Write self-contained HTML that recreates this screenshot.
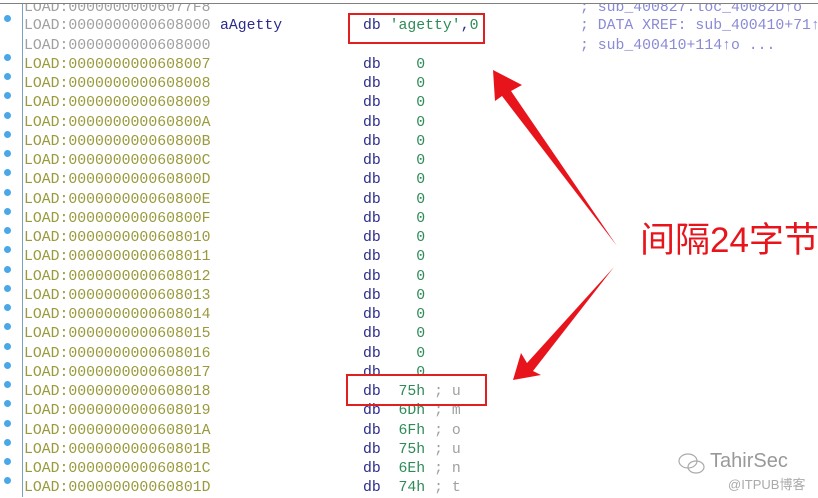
<!DOCTYPE html>
<html><head><meta charset="utf-8"><style>
html,body{margin:0;padding:0;}
body{width:818px;height:497px;background:#fff;position:relative;overflow:hidden;font-family:"Liberation Mono",monospace;font-size:14.8px;}
.r{position:absolute;left:0;height:19px;line-height:19px;white-space:pre;}
.a{position:absolute;left:24px;color:#9a9a3c;}
.g{color:#a0a0a0;}
.n{position:absolute;left:220px;color:#2b2b8c;}
.d{position:absolute;left:363px;color:#2b2b8c;}
.v{color:#2e8b57;}
.c{color:#a0a0a0;}
.s{position:absolute;left:580px;color:#8a8ad6;}
.dot{position:absolute;left:4px;width:7px;height:7px;border-radius:50%;background:#4aa8e8;}
</style></head><body>
<div style="position:absolute;left:22px;top:3px;width:1px;height:494px;background:#7aa0c8"></div>
<div id="rows"></div>
<div class="r" style="top:-1px"><span class="a g">LOAD:00000000006077F8</span><span class="s">; sub_400827.loc_40082D↑o</span></div>
<div class="r" style="top:17px"><span class="a g">LOAD:0000000000608000</span><span class="n">aAgetty</span><span class="d">db <span class="v">'agetty'</span>,<span class="v">0</span></span><span class="s">; DATA XREF: sub_400410+71↑</span></div>
<div class="r" style="top:37px"><span class="a g">LOAD:0000000000608000</span><span class="s">; sub_400410+114↑o ...</span></div>
<div class="dot" style="top:15px"></div>
<script>
var addrs=["608007","608008","608009","60800A","60800B","60800C","60800D","60800E","60800F","608010","608011","608012","608013","608014","608015","608016","608017","608018","608019","60801A","60801B","60801C","60801D"];
var vals={"608018":["75h","u"],"608019":["6Dh","m"],"60801A":["6Fh","o"],"60801B":["75h","u"],"60801C":["6Eh","n"],"60801D":["74h","t"]};
var h="";
for(var i=0;i<addrs.length;i++){
 var row=i+3; var c=6+19.25*row;
 var v=vals[addrs[i]];
 var dv=v?'db  <span class="v">'+v[0]+'</span> <span class="c">; '+v[1]+'</span>':'db    <span class="v">0</span>';
 h+='<div class="r" style="top:'+(c-8).toFixed(1)+'px"><span class="a">LOAD:0000000000'+addrs[i]+'</span><span class="d">'+dv+'</span></div>';
 h+='<div class="dot" style="top:'+(c-10).toFixed(1)+'px"></div>';
}
document.getElementById("rows").innerHTML=h;
</script>
<div style="position:absolute;left:0;top:0;width:818px;height:3px;background:#fff"></div>
<div style="position:absolute;left:0;top:3px;width:818px;height:1px;background:#808080"></div>
<div style="position:absolute;left:348px;top:13px;width:133px;height:27px;border:2px solid #e02020"></div>
<div style="position:absolute;left:346px;top:374px;width:137px;height:28px;border:2px solid #e02020"></div>
<svg style="position:absolute;left:0;top:0" width="818" height="497">
<polygon points="493,70 522,85 511,91 617,246 502,96 495,101" fill="#e8141c"/>
<polygon points="513,380 521,353 527,363 614,267 533,371 541,375" fill="#e8141c"/>
</svg>
<div style="position:absolute;left:640px;top:220px;font-family:'Liberation Sans','Noto Sans CJK SC',sans-serif;font-size:35px;line-height:42px;color:#e8141c;white-space:nowrap">间隔24字节</div>
<svg style="position:absolute;left:677px;top:452px" width="30" height="24"><g fill="none" stroke="#aaa" stroke-width="1.2"><ellipse cx="11" cy="9" rx="9" ry="7"/><ellipse cx="19" cy="15" rx="8" ry="6"/></g></svg>
<div style="position:absolute;left:710px;top:450px;font-family:'Liberation Sans',sans-serif;font-size:20px;color:#999;white-space:nowrap">TahirSec</div>
<div style="position:absolute;left:728px;top:474px;font-family:'Liberation Sans','Noto Sans CJK SC',sans-serif;font-size:13px;color:#aaa;white-space:nowrap">@ITPUB博客</div>
</body></html>
